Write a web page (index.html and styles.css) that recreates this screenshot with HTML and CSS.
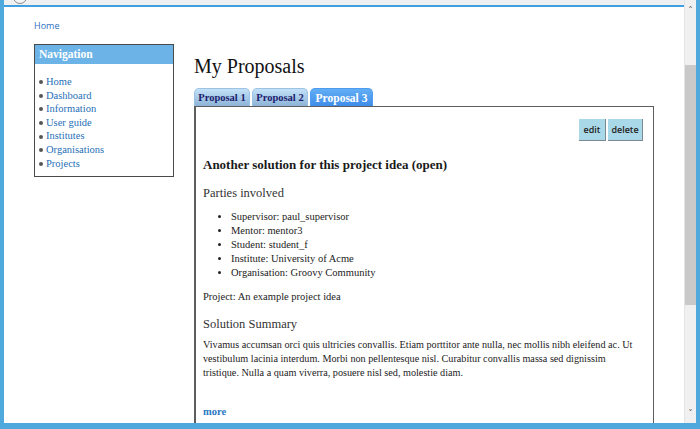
FILE: index.html
```html
<!DOCTYPE html>
<html>
<head>
<meta charset="utf-8">
<link rel="stylesheet" href="styles.css">
</head>
<body>
<div class="window">
  <div class="viewport">
    <div class="chrome-top"><span class="chrome-circle"></span></div>
    <div class="page">
      <a class="crumb" href="#">Home</a>
      <div class="layout">
        <aside class="nav">
          <div class="nav-title">Navigation</div>
          <ul class="nav-list">
            <li><a href="#">Home</a></li>
            <li><a href="#">Dashboard</a></li>
            <li><a href="#">Information</a></li>
            <li><a href="#">User guide</a></li>
            <li><a href="#">Institutes</a></li>
            <li><a href="#">Organisations</a></li>
            <li><a href="#">Projects</a></li>
          </ul>
        </aside>
        <main class="main">
          <h1 class="title">My Proposals</h1>
          <div class="tabs">
            <span class="tab">Proposal 1</span>
            <span class="tab">Proposal 2</span>
            <span class="tab tab-active">Proposal 3</span>
          </div>
          <div class="panel">
            <div class="actions">
              <span class="btn btn-edit">edit</span>
              <span class="btn btn-delete">delete</span>
            </div>
            <h2 class="proposal-title">Another solution for this project idea (open)</h2>
            <h3 class="section">Parties involved</h3>
            <ul class="parties">
              <li>Supervisor: paul_supervisor</li>
              <li>Mentor: mentor3</li>
              <li>Student: student_f</li>
              <li>Institute: University of Acme</li>
              <li>Organisation: Groovy Community</li>
            </ul>
            <p class="project">Project: An example project idea</p>
            <h3 class="section summary-head">Solution Summary</h3>
            <p class="summary">Vivamus accumsan orci quis ultricies convallis. Etiam porttitor ante nulla, nec mollis nibh eleifend ac. Ut vestibulum lacinia interdum. Morbi non pellentesque nisl. Curabitur convallis massa sed dignissim tristique. Nulla a quam viverra, posuere nisl sed, molestie diam.</p>
            <a class="more" href="#">more</a>
          </div>
        </main>
      </div>
    </div>
  </div>
  <div class="scrollbar">
    <span class="arrow">&#708;</span>
    <div class="track"><div class="thumb"></div></div>
    <span class="arrow">&#709;</span>
  </div>
</div>
</body>
</html>
```

FILE: styles.css
```css
* { box-sizing: border-box; }
html, body { margin: 0; padding: 0; background: #ffffff; }

.window {
  width: 700px;
  height: 429px;
  display: grid;
  grid-template-columns: 1fr 12px;
  border-left: 4px solid #4fa9dc;
  border-right: 4px solid #4fa9dc;
  border-bottom: 6px solid #4fa9dc;
  box-shadow: inset 0 -2px 0 #8fcbea;
  overflow: hidden;
  font-family: "Liberation Serif", serif;
}

.viewport {
  overflow: hidden;
  background: #fff;
}

.chrome-top {
  height: 7px;
  background: #eef0f2;
  border-bottom: 2px solid #3f9fe0;
  overflow: hidden;
  display: flex;
}
.chrome-circle {
  width: 14px;
  height: 14px;
  border: 1px solid #8a8a8a;
  border-radius: 50%;
  margin: -10px 0 0 9px;
  background: #f6f6f6;
}

.page { padding: 13px 0 0 30px; }

.crumb {
  display: block;
  font-family: "Open Sans", sans-serif;
  font-size: 9px;
  line-height: 12px;
  color: #2a6fbf;
  text-decoration: none;
}

.layout {
  display: flex;
  align-items: flex-start;
  gap: 20px;
  margin-top: 12px;
}

.nav {
  width: 140px;
  border: 1px solid #4a4a4a;
  padding-bottom: 6px;
}
.nav-title {
  background: #6cb4e7;
  color: #fff;
  font-weight: bold;
  font-size: 11.5px;
  height: 19px;
  line-height: 19px;
  padding-left: 4px;
}
.nav-list {
  margin: 11px 0 0 0;
  padding-left: 4px;
  list-style: none;
}
.nav-list li {
  font-size: 10.5px;
  line-height: 13.6px;
  display: flex;
  align-items: center;
}
.nav-list li::before {
  content: "";
  width: 4px;
  height: 4px;
  border-radius: 50%;
  background: #555;
  margin: 1px 3px 0 0;
}
.nav-list a { color: #1f6fb8; text-decoration: none; }

.main { width: 460px; }

.title {
  font-weight: normal;
  font-size: 20px;
  line-height: 24px;
  margin: 10px 0 10px 0;
  color: #111;
}

.tabs {
  display: flex;
  gap: 2px;
  height: 18px;
}
.tab {
  width: 56px;
  height: 18px;
  border-radius: 5px 5px 0 0;
  background: linear-gradient(#c3e1f8, #8cb3d6);
  border: 1px solid #9cc3e3;
  border-bottom: none;
  color: #1c1c6e;
  font-size: 10.5px;
  line-height: 18px;
  text-align: center;
  font-weight: bold;
}
.tab-active {
  width: 63px;
  background: linear-gradient(#62aef5, #3f8ce9);
  border-color: #4d9cf0;
  color: #fff;
  font-size: 11.5px;
}

.panel {
  border: 1px solid #5e5e5e;
  border-left-width: 2px;
  border-bottom: none;
  padding: 12px 10px 40px 7px;
  color: #222;
  font-size: 10px;
}

.actions {
  display: flex;
  justify-content: flex-end;
  gap: 2px;
}
.btn {
  height: 22px;
  line-height: 21px;
  background: #a9d8e8;
  border-right: 1px solid #7a8a90;
  border-bottom: 1px solid #7a8a90;
  font-family: "Open Sans", sans-serif;
  font-size: 9px;
  font-weight: 600;
  color: #222;
  text-align: center;
}
.btn-edit { width: 27px; }
.btn-delete { width: 35px; }

.proposal-title {
  font-size: 13px;
  font-weight: bold;
  line-height: 16px;
  margin: 16px 0 0 0;
  color: #1a1a1a;
}
.section {
  font-size: 12.5px;
  font-weight: normal;
  line-height: 15px;
  margin: 13px 0 0 0;
  color: #333;
}
.parties {
  margin: 9px 0 0 0;
  padding-left: 28px;
  list-style: disc;
}
.parties li {
  font-size: 10.5px;
  line-height: 14px;
}
.project {
  font-size: 10.5px;
  line-height: 14px;
  margin: 10px 0 0 0;
}
.summary-head { margin-top: 13px; }
.summary {
  font-size: 10.2px;
  line-height: 14px;
  margin: 6px 0 0 0;
}
.more {
  display: block;
  margin-top: 25px;
  font-size: 10.5px;
  line-height: 14px;
  font-weight: bold;
  color: #2a78c2;
  text-decoration: none;
}

.scrollbar {
  background: #f0f0f0;
  display: flex;
  flex-direction: column;
  align-items: center;
  border-left: 1px solid #e4e4e4;
}
.arrow {
  font-family: "DejaVu Sans", sans-serif;
  font-size: 9px;
  line-height: 12px;
  height: 12px;
  color: #555;
  margin-top: 4px;
}
.scrollbar .arrow:last-child { margin: 0 0 4px 0; }
.track {
  flex: 1;
  width: 100%;
  padding-top: 49px;
}
.thumb {
  width: 100%;
  height: 240px;
  background: #c9c9c9;
}
```
